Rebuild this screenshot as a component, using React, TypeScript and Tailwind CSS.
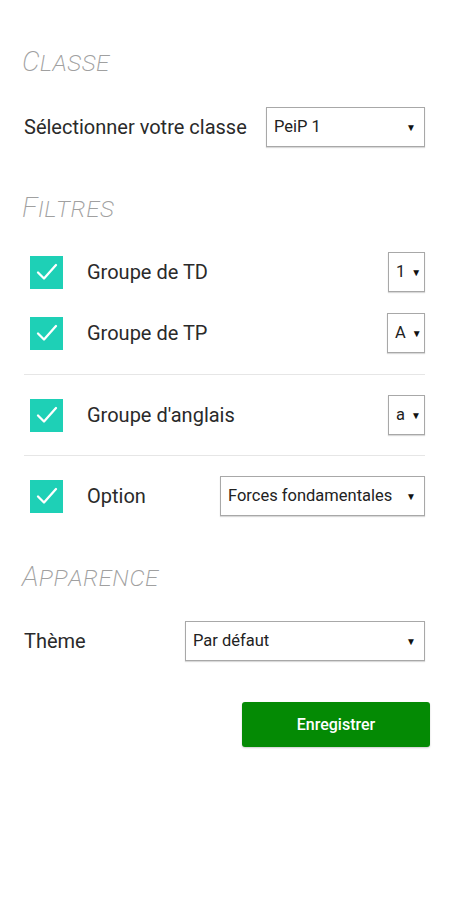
import React from 'react';

function Heading({ children, className = '' }: { children: React.ReactNode; className?: string }) {
  return (
    <h2
      className={`text-[28px] leading-[32px] italic font-extralight text-[#a0a0a0] tracking-[0.5px] ${className}`}
      style={{ fontVariant: 'small-caps' }}
    >
      {children}
    </h2>
  );
}

function FakeSelect({ value, className = '' }: { value: string; className?: string }) {
  return (
    <div
      className={`h-[40px] border border-[#a8a8a8] shadow-[0_1px_1px_rgba(0,0,0,0.15)] bg-white flex items-center justify-between pl-[7px] pr-[8px] text-[16.5px] text-[#222] ${className}`}
    >
      <span className="whitespace-nowrap">{value}</span>
      <span className="text-[10px] text-[#111] ml-[6px]">▼</span>
    </div>
  );
}

function Check() {
  return (
    <div className="w-[33px] h-[33px] bg-[#1ed0b6] flex items-center justify-center shrink-0">
      <svg width="24" height="24" viewBox="0 0 24 24" fill="none">
        <path d="M3 12.5l6 6L21 5" stroke="white" strokeWidth="2.3" strokeLinecap="round" strokeLinejoin="round" />
      </svg>
    </div>
  );
}

function FilterRow({ label, value, selectClass }: { label: string; value: string; selectClass: string }) {
  return (
    <div className="flex items-center">
      <div className="pl-[6px]">
        <Check />
      </div>
      <span className="ml-[24px] text-[20px] text-[#2a2a2a] flex-1">{label}</span>
      <FakeSelect value={value} className={selectClass} />
    </div>
  );
}

export default function App() {
  return (
    <div className="w-[450px] h-[900px] bg-white pl-[22px] pr-[25px] pt-[46px]" style={{ fontFamily: 'Roboto, "Liberation Sans", sans-serif' }}>
      <Heading>Classe</Heading>

      <div className="mt-[29px] flex items-center justify-between pl-[2px]">
        <span className="text-[20px] text-[#2a2a2a]">Sélectionner votre classe</span>
        <FakeSelect value="PeiP 1" className="w-[159px]" />
      </div>

      <Heading className="mt-[45px]">Filtres</Heading>

      <div className="mt-[28px] pl-[2px]">
        <FilterRow label="Groupe de TD" value="1" selectClass="w-[37px] pl-[6px] pr-[4px]" />
        <div className="mt-[21px]">
          <FilterRow label="Groupe de TP" value="A" selectClass="w-[38px] pl-[5px] pr-[4px]" />
        </div>
        <div className="mt-[21px] border-t border-[#e6e6e6]" />
        <div className="mt-[20px]">
          <FilterRow label="Groupe d'anglais" value="a" selectClass="w-[37px] pl-[6px] pr-[4px]" />
        </div>
        <div className="mt-[20px] border-t border-[#e6e6e6]" />
        <div className="mt-[20px]">
          <FilterRow label="Option" value="Forces fondamentales" selectClass="w-[205px]" />
        </div>
      </div>

      <Heading className="mt-[45px]">Apparence</Heading>

      <div className="mt-[28px] flex items-center justify-between pl-[2px]">
        <span className="text-[20px] text-[#2a2a2a]">Thème</span>
        <FakeSelect value="Par défaut" className="w-[240px]" />
      </div>

      <div className="mt-[41px] flex justify-end -mr-[5px]">
        <button className="w-[188px] h-[45px] bg-[#048a04] rounded-[3px] text-white text-[16px] font-medium shadow-[0_1px_2px_rgba(0,0,0,0.2)]">
          Enregistrer
        </button>
      </div>
    </div>
  );
}
